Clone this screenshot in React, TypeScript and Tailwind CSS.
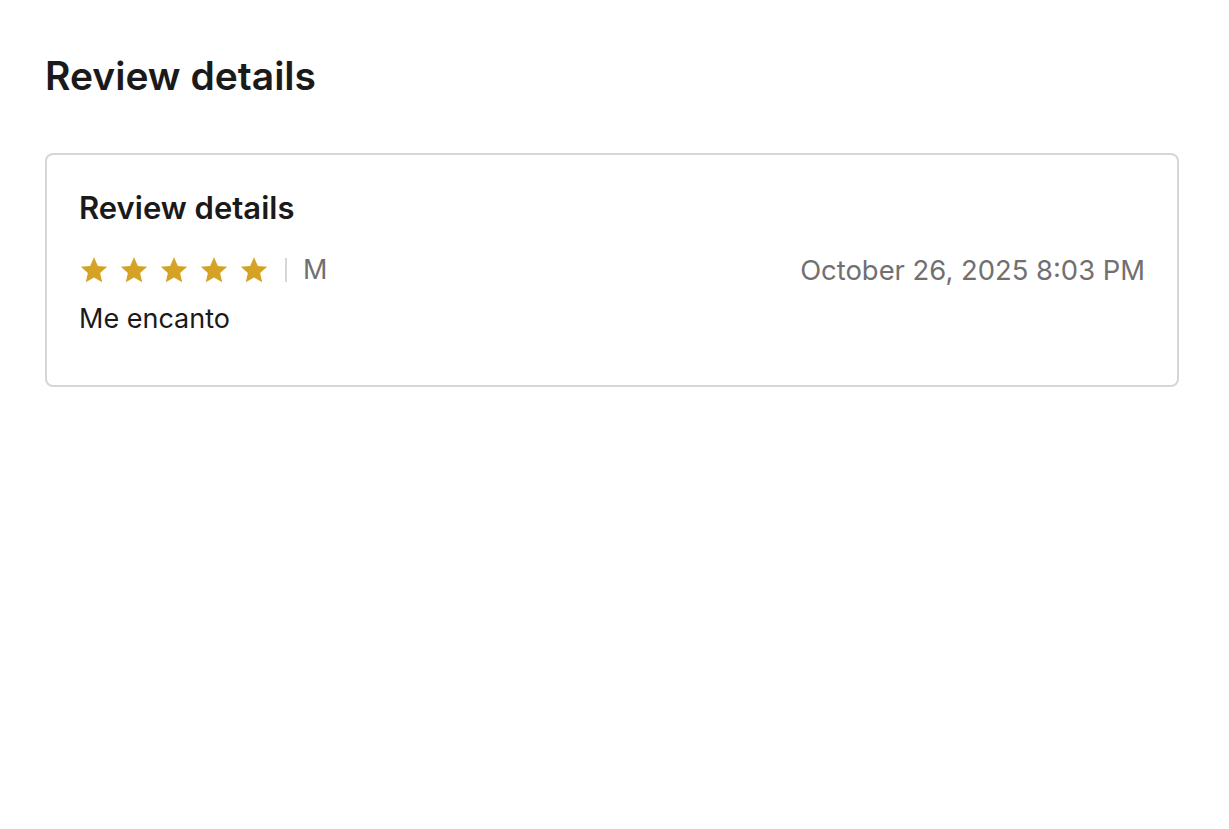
import React from 'react';

const Star: React.FC = () => (
  <svg width="30" height="30" viewBox="0 0 24 24" className="fill-[#d4a326]">
    <path d="M12 1.8l3.1 6.9 7.4.7-5.6 5 1.7 7.4L12 17.9l-6.6 3.9 1.7-7.4-5.6-5 7.4-.7z" />
  </svg>
);

const App: React.FC = () => {
  return (
    <div className="min-h-screen bg-white pl-[45px] pr-[50px] pt-[51px] font-['Inter',sans-serif] text-[#1a1a1a]">
      <h1 className="text-[39px] font-semibold leading-[50px]">Review details</h1>

      <div className="mt-[52px] rounded-[8px] border-2 border-[#d6d6d6] px-[32px] pt-[33px] pb-[48px]">
        <h2 className="text-[31px] font-semibold leading-[40px]">Review details</h2>

        <div className="mt-[24px] flex items-center justify-between">
          <div className="flex items-center">
            <div className="flex items-center gap-[10px]">
              <Star />
              <Star />
              <Star />
              <Star />
              <Star />
            </div>
            <div className="ml-[16px] h-[24px] w-[2px] bg-[#d6d6d6]" />
            <span className="ml-[16px] text-[27px] leading-[36px] text-[#707070]">M</span>
          </div>
          <span className="text-[27.4px] leading-[36px] text-[#707070]">October 26, 2025 8:03 PM</span>
        </div>

        <p className="mt-[13px] text-[27px] leading-[36px]">Me encanto</p>
      </div>
    </div>
  );
};

export default App;
